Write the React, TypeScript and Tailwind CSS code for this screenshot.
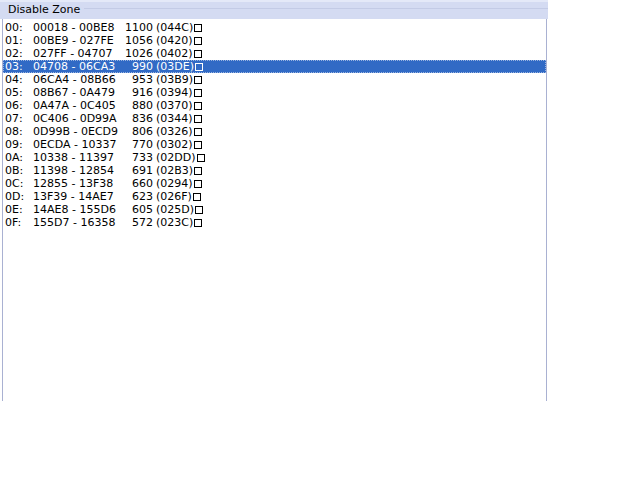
type Row = { id: string; range: string; count: string; hex: string }

const rows: Row[] = [
  { id: '00:', range: '00018 - 00BE8', count: '1100', hex: '(044C)' },
  { id: '01:', range: '00BE9 - 027FE', count: '1056', hex: '(0420)' },
  { id: '02:', range: '027FF - 04707', count: '1026', hex: '(0402)' },
  { id: '03:', range: '04708 - 06CA3', count: '990', hex: '(03DE)' },
  { id: '04:', range: '06CA4 - 08B66', count: '953', hex: '(03B9)' },
  { id: '05:', range: '08B67 - 0A479', count: '916', hex: '(0394)' },
  { id: '06:', range: '0A47A - 0C405', count: '880', hex: '(0370)' },
  { id: '07:', range: '0C406 - 0D99A', count: '836', hex: '(0344)' },
  { id: '08:', range: '0D99B - 0ECD9', count: '806', hex: '(0326)' },
  { id: '09:', range: '0ECDA - 10337', count: '770', hex: '(0302)' },
  { id: '0A:', range: '10338 - 11397', count: '733', hex: '(02DD)' },
  { id: '0B:', range: '11398 - 12854', count: '691', hex: '(02B3)' },
  { id: '0C:', range: '12855 - 13F38', count: '660', hex: '(0294)' },
  { id: '0D:', range: '13F39 - 14AE7', count: '623', hex: '(026F)' },
  { id: '0E:', range: '14AE8 - 155D6', count: '605', hex: '(025D)' },
  { id: '0F:', range: '155D7 - 16358', count: '572', hex: '(023C)' },
]

const selected = 3

export default function App() {
  return (
    <div className="w-[640px] h-[480px] bg-white text-black" style={{ fontFamily: '"DejaVu Sans", Verdana, sans-serif' }}>
      <div className="w-[548px] h-[401px] flex flex-col">
        <div className="h-[19px] flex items-start bg-[#d4dbf2] border-t-2 border-[#e4e9f8]">
          <span className="pl-[8px] pt-[1px] pr-[4px] text-[11px] leading-[13px]">Disable Zone</span>
          <div className="flex-1 mt-[6px] h-px bg-[#c3cbe6]" />
        </div>
        <div className="flex-1 ml-[2px] mr-[1px] border-l border-r border-[#a9b1d2] pt-[2px]">
          {rows.map((r, i) => (
            <div
              key={r.id}
              className={`h-[13px] pl-[2px] text-[11px] leading-[13px] whitespace-pre flex items-center ${
                i === selected ? 'bg-[#316ac5] text-white outline-1 outline-dotted outline-[#9ab4e0] -outline-offset-1' : ''
              }`}
            >
              <span className="w-[28px]">{r.id}</span>
              <span className="w-[89px]">{r.range}</span>
              <span className="w-[31px] text-right">{r.count}</span>
              <span className="pl-[3px]">{r.hex}</span>
              <span className={`inline-block w-[8px] h-[8px] ml-[1px] border ${i === selected ? 'border-white' : 'border-black'}`} />
            </div>
          ))}
        </div>
      </div>
    </div>
  )
}
